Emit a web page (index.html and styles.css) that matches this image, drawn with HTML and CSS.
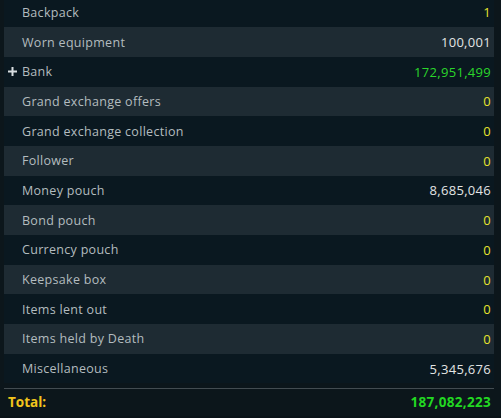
FILE: index.html
```html
<!DOCTYPE html>
<html>
<head>
<meta charset="utf-8">
<link rel="stylesheet" href="styles.css">
</head>
<body>
<div class="panel">
  <div class="list">
    <div class="row dark"><span class="label">Backpack</span><span class="val yellow">1</span></div>
    <div class="row light"><span class="label">Worn equipment</span><span class="val white">100,001</span></div>
    <div class="row dark"><svg class="plus" width="9" height="9" viewBox="0 0 9 9"><path d="M0 4.5H9M4.5 0V9" stroke="#d8dde0" stroke-width="2"/></svg><span class="label">Bank</span><span class="val green">172,951,499</span></div>
    <div class="row light"><span class="label">Grand exchange offers</span><span class="val yellow">0</span></div>
    <div class="row dark"><span class="label">Grand exchange collection</span><span class="val yellow">0</span></div>
    <div class="row light"><span class="label">Follower</span><span class="val yellow">0</span></div>
    <div class="row dark"><span class="label">Money pouch</span><span class="val white">8,685,046</span></div>
    <div class="row light"><span class="label">Bond pouch</span><span class="val yellow">0</span></div>
    <div class="row dark"><span class="label">Currency pouch</span><span class="val yellow">0</span></div>
    <div class="row light"><span class="label">Keepsake box</span><span class="val yellow">0</span></div>
    <div class="row dark"><span class="label">Items lent out</span><span class="val yellow">0</span></div>
    <div class="row light"><span class="label">Items held by Death</span><span class="val yellow">0</span></div>
    <div class="row dark"><span class="label">Miscellaneous</span><span class="val white">5,345,676</span></div>
  </div>
  <div class="divider"></div>
  <div class="total"><span class="total-label">Total:</span><span class="total-val">187,082,223</span></div>
</div>
</body>
</html>
```

FILE: styles.css
```css
html, body {
  margin: 0;
  padding: 0;
  background: #0a1318;
  height: 418px;
  overflow: hidden;
}
body {
  font-family: "Open Sans", "DejaVu Sans", sans-serif;
  font-size: 12.5px;
}
.panel {
  padding: 0 7px 0 4px;
  background: #0c161b;
  height: 418px;
}
.list {
  margin-top: -2.5px;
}
.row {
  height: 29.7px;
  display: flex;
  align-items: center;
  padding: 0 3px 0 18px;
  position: relative;
}
.row.dark { background: #0a1820; }
.row.light { background: #1e2b33; }
.label {
  color: #b3bcbf;
  flex: 1;
  letter-spacing: 0.3px;
}
.plus {
  position: absolute;
  left: 4px;
  top: 10px;
}
.val {
  font-size: 13px;
  letter-spacing: 0.3px;
}
.yellow { color: #e6e42e; }
.white { color: #e2e4e4; }
.green { color: #2bd62b; }
.divider {
  height: 1px;
  background: #434c51;
  margin-top: 4.9px;
}
.total {
  display: flex;
  align-items: center;
  height: 26px;
  padding: 0 3px 0 4px;
  font-weight: bold;
  font-size: 13.5px;
}
.total-label { color: #f2c51c; flex: 1; }
.total-val { color: #22d822; letter-spacing: 0.3px; }
```
